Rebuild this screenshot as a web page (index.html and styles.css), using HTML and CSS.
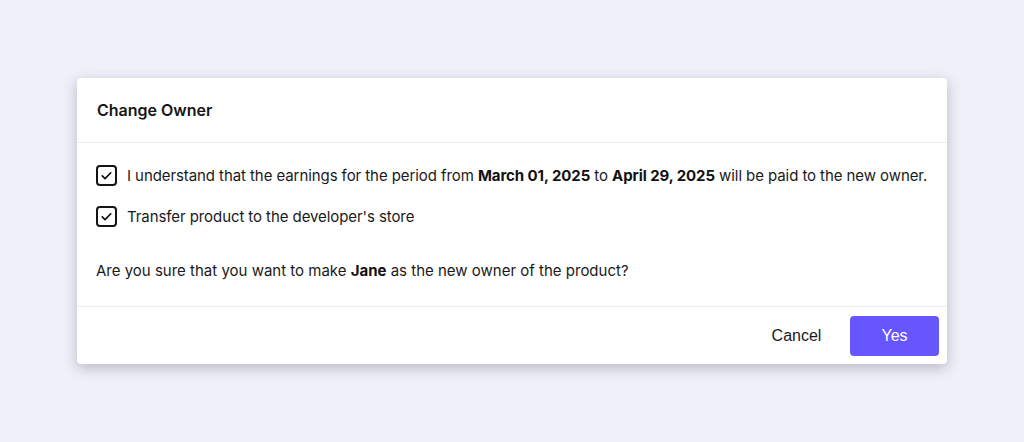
FILE: index.html
```html
<!DOCTYPE html>
<html lang="en">
<head>
<meta charset="utf-8">
<link rel="stylesheet" href="styles.css">
</head>
<body>
<div class="page">
  <div class="dialog">
    <div class="dialog-header">
      <h2 class="dialog-title">Change Owner</h2>
    </div>
    <div class="dialog-body">
      <label class="check-row">
        <span class="checkbox"><svg viewBox="0 0 20 20"><path d="M5 10.5l3.3 3.2 6.7-6.9" fill="none" stroke="#111" stroke-width="2" stroke-linecap="round" stroke-linejoin="round"/></svg></span>
        <span class="check-text">I understand that the earnings for the period from <b>March 01, 2025</b> to <b>April 29, 2025</b> will be paid to the new owner.</span>
      </label>
      <label class="check-row">
        <span class="checkbox"><svg viewBox="0 0 20 20"><path d="M5 10.5l3.3 3.2 6.7-6.9" fill="none" stroke="#111" stroke-width="2" stroke-linecap="round" stroke-linejoin="round"/></svg></span>
        <span class="check-text">Transfer product to the developer's store</span>
      </label>
      <p class="question">Are you sure that you want to make <b>Jane</b> as the new owner of the product?</p>
    </div>
    <div class="dialog-footer">
      <button class="btn btn-cancel">Cancel</button>
      <button class="btn btn-yes">Yes</button>
    </div>
  </div>
</div>
</body>
</html>
```
FILE: styles.css
```css
* { box-sizing: border-box; }
html, body { margin: 0; padding: 0; }
body {
  background: #eff0f8;
  font-family: "Inter", "Noto Sans", sans-serif;
  color: #1a1a1a;
}
.page {
  width: 1024px;
  height: 442px;
  display: flex;
  align-items: center;
  justify-content: center;
}
.dialog {
  width: 870px;
  background: #fff;
  border-radius: 4px;
  box-shadow: 0 4px 14px rgba(40, 40, 70, 0.28);
}
.dialog-header {
  height: 65px;
  display: flex;
  align-items: center;
  padding: 0 20px;
  border-bottom: 1px solid #ececf3;
}
.dialog-title {
  margin: 0;
  font-size: 16px;
  font-weight: 600;
  color: #161616;
}
.dialog-body {
  padding: 22px 19px 25px;
  border-bottom: 1px solid #ececf3;
}
.check-row {
  display: flex;
  align-items: center;
  gap: 10px;
  height: 21px;
  margin-bottom: 20px;
}
.checkbox {
  width: 21px;
  height: 21px;
  border: 2px solid #141414;
  border-radius: 4px;
  display: flex;
  align-items: center;
  justify-content: center;
  flex: none;
}
.checkbox svg { width: 17px; height: 17px; display: block; }
.check-text {
  font-size: 15px;
  color: #1a1a1a;
  white-space: nowrap;
  letter-spacing: -0.08px;
}
.check-text b, .question b { font-weight: 700; color: #111; }
.question {
  margin: 35px 0 0;
  font-size: 15px;
  line-height: 20px;
  color: #1a1a1a;
}
.check-row + .question { margin-top: 34px; }
.dialog-footer {
  height: 57px;
  display: flex;
  align-items: center;
  justify-content: flex-end;
  gap: 9px;
  padding: 0 8px;
}
.btn {
  height: 40px;
  width: 89px;
  border: none;
  border-radius: 4px;
  font-family: "Liberation Sans", Arial, sans-serif;
  font-size: 16px;
  cursor: pointer;
}
.btn-cancel {
  background: transparent;
  color: #1a1a1a;
}
.btn-yes {
  background: #6755fd;
  color: #fff;
}
```
